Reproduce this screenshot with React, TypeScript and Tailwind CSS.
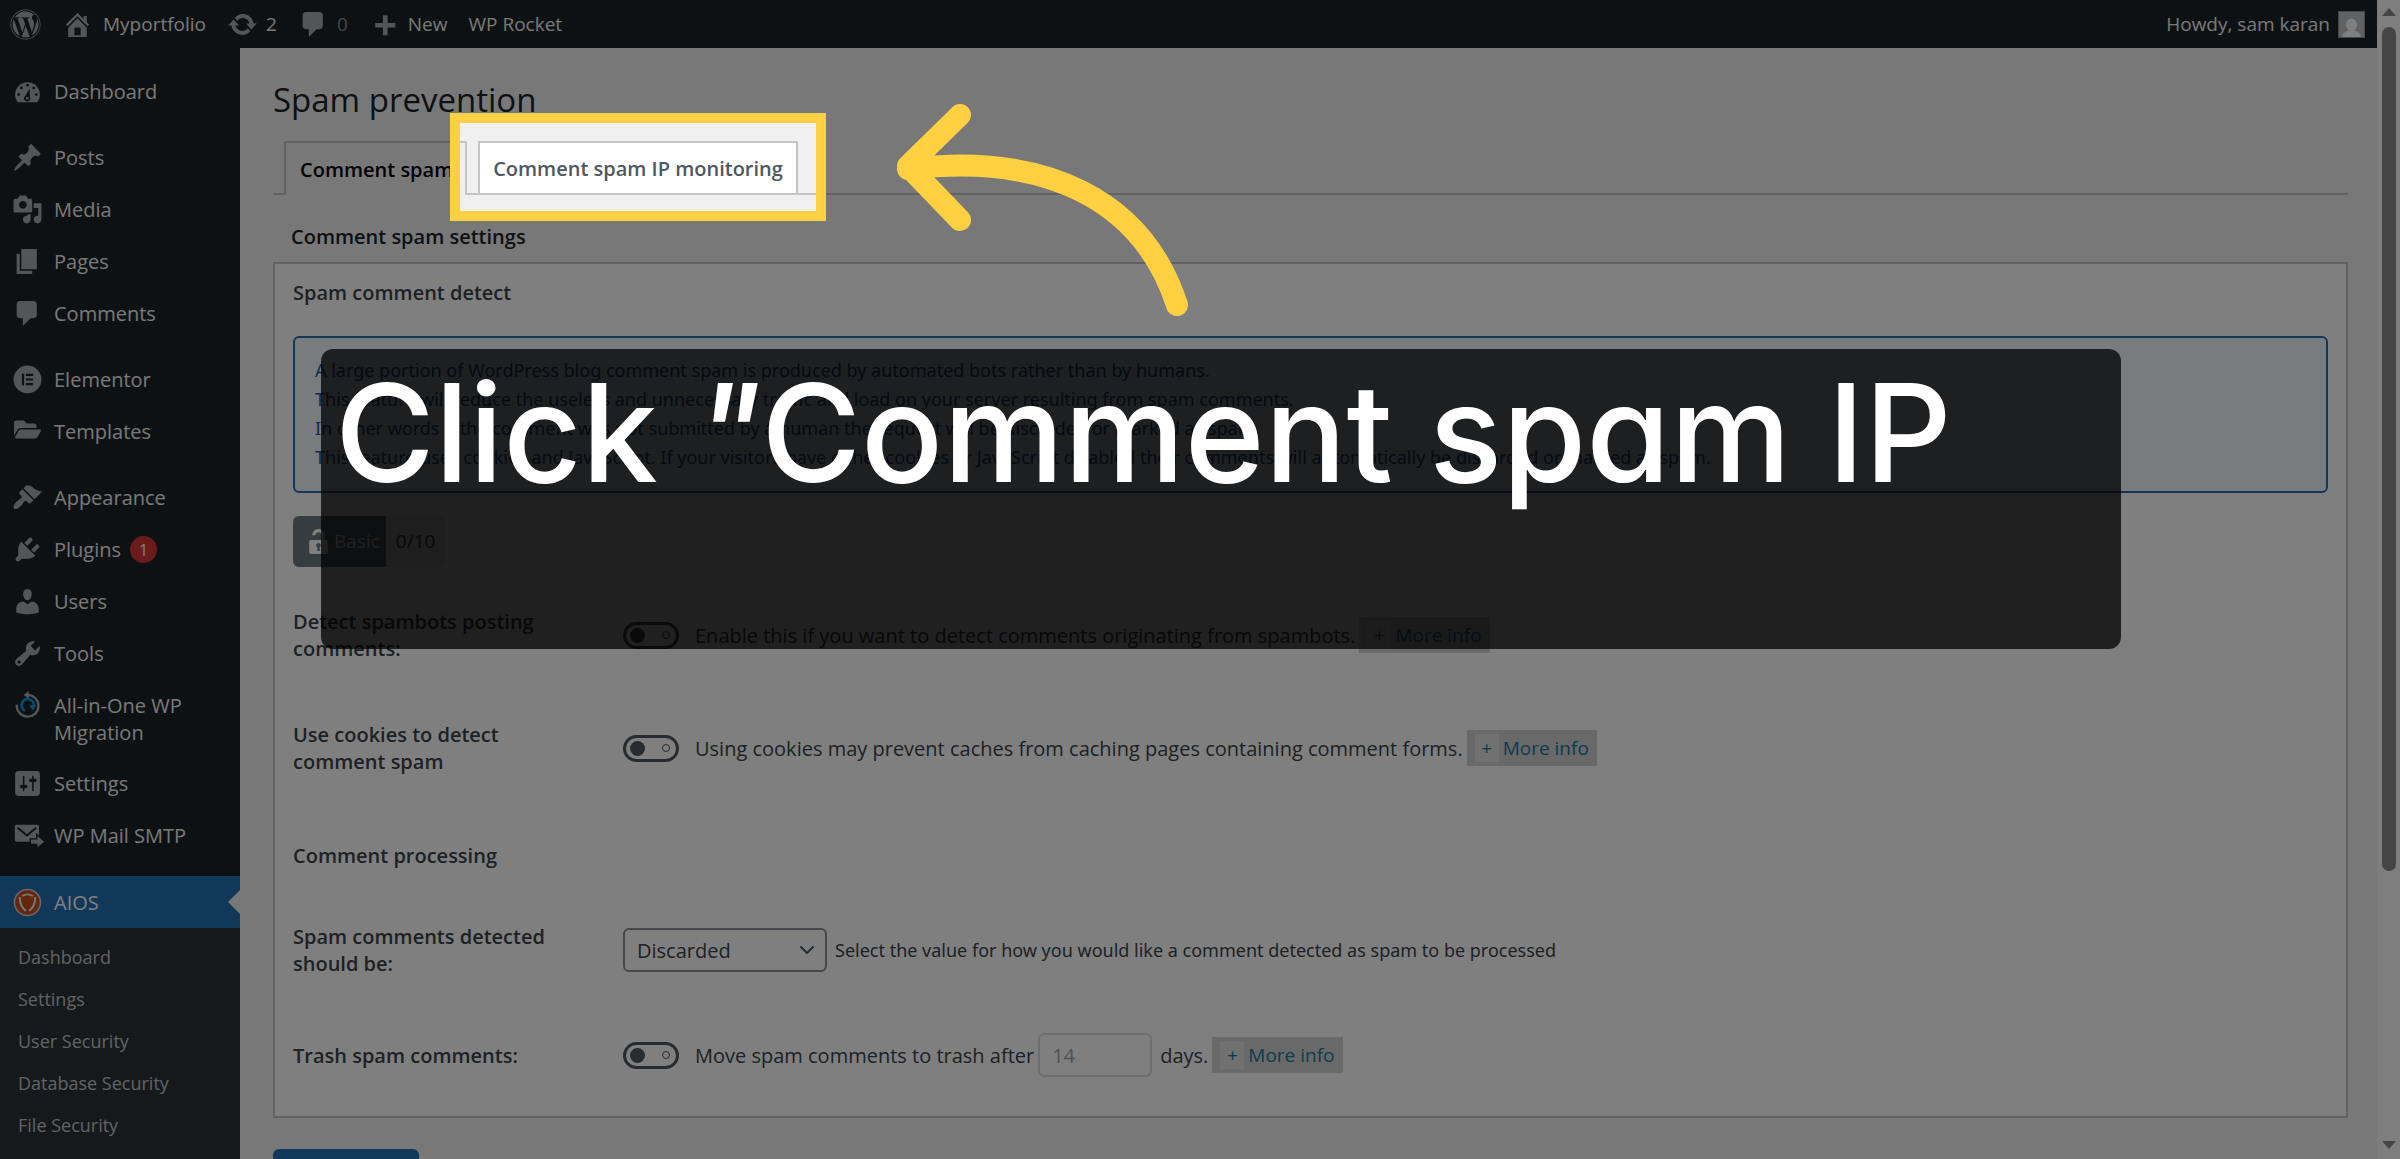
import type { ReactNode } from 'react';
import { ChevronDown } from 'lucide-react';
import { FaFolderOpen, FaWordpress } from 'react-icons/fa';

const ICONS = {
  home: 'M16 8.5l1.53 1.53-1.06 1.06L10 4.6l-6.47 6.49-1.06-1.06L10 2.5l4 4v-2h2v4zm-6-2.46l6 5.99V18H4v-5.97zM12 17v-5H8v5h4z',
  update: 'M10.2 3.28c3.53 0 6.43 2.61 6.92 6h2.08l-3.5 4-3.5-4h2.32c-.45-1.97-2.21-3.45-4.32-3.45-1.45 0-2.73.71-3.54 1.78L4.95 5.66C6.23 4.2 8.11 3.28 10.2 3.28zm-.4 13.44c-3.52 0-6.43-2.61-6.92-6H.8l3.5-4c1.17 1.33 2.33 2.67 3.5 4H5.48c.45 1.97 2.21 3.45 4.32 3.45 1.45 0 2.73-.71 3.54-1.78l1.71 1.95c-1.28 1.46-3.15 2.38-5.25 2.38z',
  plus: 'M17 9v3h-5v5H9v-5H4V9h5V4h3v5h5z',
  comments: 'M5 2h9c1.1 0 2 .9 2 2v7c0 1.1-.9 2-2 2h-2l-5 5v-5H5c-1.1 0-2-.9-2-2V4c0-1.1.9-2 2-2z',
  post: 'M10.44 3.02l1.82-1.82 6.36 6.35-1.83 1.82c-1.05-.68-2.48-.57-3.41.36l-.75.75c-.92.93-1.04 2.35-.35 3.41l-1.83 1.82-2.41-2.41-2.8 2.79c-.42.42-3.38 2.71-3.8 2.29s1.86-3.39 2.28-3.81l2.79-2.79L4.1 9.36l1.83-1.82c1.05.69 2.48.57 3.4-.36l.75-.75c.93-.92 1.05-2.35.36-3.41z',
  media: 'M13 11V4c0-.55-.45-1-1-1h-1.67L9 1H5L3.67 3H2c-.55 0-1 .45-1 1v7c0 .55.45 1 1 1h10c.55 0 1-.45 1-1zM7 4.5c1.38 0 2.5 1.12 2.5 2.5S8.38 9.5 7 9.5 4.5 8.38 4.5 7 5.62 4.5 7 4.5zM14 6h5v10.5c0 1.38-1.12 2.5-2.5 2.5S14 17.88 14 16.5s1.12-2.5 2.5-2.5c.17 0 .34.02.5.05V9h-3V6zm-4 8.05V13h2v3.5c0 1.38-1.12 2.5-2.5 2.5S7 17.88 7 16.5 8.12 14 9.5 14c.17 0 .34.02.5.05z',
  page: 'M6 15V2h10v13H6zm-1 1h8v2H3V5h2v11z',
  appearance: 'M14.48 11.06L7.41 3.99l1.5-1.5c.5-.56 2.3-.47 3.51.32 1.21.8 1.43 1.28 2.91 2.1 1.18.64 2.45 1.26 4.45.85zm-.71.71L6.7 4.7 4.93 6.47c-.39.39-.39 1.02 0 1.41l1.06 1.06c.39.39.39 1.03 0 1.42-.6.6-1.43 1.11-2.21 1.69-.35.26-.7.53-1.01.84C1.43 14.23.4 16.08 1.4 17.07c.99 1 2.84-.03 4.18-1.36.31-.31.58-.66.85-1.02.57-.78 1.08-1.61 1.69-2.21.39-.39 1.02-.39 1.41 0l1.06 1.06c.39.39 1.02.39 1.41 0z',
  plugins: 'M13.11 4.36L9.87 7.6 8 5.73l3.24-3.24c.35-.34 1.05-.2 1.56.32.52.51.66 1.21.31 1.55zm-8 1.77l.91-1.12 9.01 9.01-1.19.84c-.71.71-2.63 1.16-3.82 1.16H6.14L4.9 17.26c-.59.59-1.54.59-2.12 0-.59-.58-.59-1.53 0-2.12l1.24-1.24v-3.88c0-1.13.4-3.19 1.09-3.89zm7.26 3.97l3.24-3.24c.34-.35 1.04-.21 1.55.31.52.51.66 1.21.31 1.55l-3.24 3.25z',
  users: 'M10 9.25c-2.27 0-2.73-3.44-2.73-3.44C7 4.02 7.82 2 9.97 2c2.16 0 2.98 2.02 2.71 3.81 0 0-.41 3.44-2.68 3.44zm0 2.57L12.72 10c2.39 0 4.52 2.33 4.52 4.53v2.49s-3.65 1.13-7.24 1.13c-3.65 0-7.24-1.13-7.24-1.13v-2.49c0-2.25 1.94-4.48 4.47-4.48z',
  tools: 'M16.68 9.77c-1.34 1.34-3.3 1.67-4.95.99l-5.41 6.52c-.99.99-2.59.99-3.58 0s-.99-2.59 0-3.57l6.52-5.42c-.68-1.65-.35-3.61.99-4.95 1.28-1.28 3.12-1.62 4.72-1.06l-2.89 2.89 2.82 2.82 2.86-2.87c.53 1.58.18 3.39-1.08 4.65zM3.81 16.21c.4.39 1.04.39 1.43 0 .4-.4.4-1.04 0-1.43-.39-.4-1.03-.4-1.43 0-.39.39-.39 1.03 0 1.43z',
  settings: 'M18 16V4c0-1.1-.9-2-2-2H4c-1.1 0-2 .9-2 2v12c0 1.1.9 2 2 2h12c1.1 0 2-.9 2-2zM8 11h1c.55 0 1 .45 1 1s-.45 1-1 1H8v1.5c0 .28-.22.5-.5.5s-.5-.22-.5-.5V13H6c-.55 0-1-.45-1-1s.45-1 1-1h1V5.5c0-.28.22-.5.5-.5s.5.22.5.5V11zm5-2h-1c-.55 0-1-.45-1-1s.45-1 1-1h1V5.5c0-.28.22-.5.5-.5s.5.22.5.5V7h1c.55 0 1 .45 1 1s-.45 1-1 1h-1v5.5c0 .28-.22.5-.5.5s-.5-.22-.5-.5V9z',
  unlock: 'M12 9V6c0-1.1-.9-2-2-2s-2 .9-2 2H6c0-2.21 1.79-4 4-4s4 1.79 4 4v3h1c.55 0 1 .45 1 1v7c0 .55-.45 1-1 1H5c-.55 0-1-.45-1-1v-7c0-.55.45-1 1-1h7zm-1 7l-.36-2.15c.51-.24.86-.75.86-1.35 0-.83-.67-1.5-1.5-1.5s-1.5.67-1.5 1.5c0 .6.35 1.11.86 1.35L9 16h2z',
};

type IconName = keyof typeof ICONS;

function Dashicon({ name, className = 'size-[31px]' }: { name: IconName; className?: string }) {
  return (
    <svg viewBox="0 0 20 20" className={`${className} shrink-0`} fill="currentColor" aria-hidden="true">
      <path fillRule="evenodd" d={ICONS[name]} />
    </svg>
  );
}

function DashboardIcon() {
  return (
    <svg viewBox="0 0 20 20" className="size-[31px] shrink-0" aria-hidden="true">
      <path fill="currentColor" d="M3.76 17h12.48c1.1-1.37 1.76-3.11 1.76-5 0-4.42-3.58-8-8-8s-8 3.58-8 8c0 1.89.66 3.63 1.76 5z" />
      <g fill="#1d2327">
        <circle cx="10" cy="5.9" r="0.9" />
        <circle cx="6" cy="7.7" r="0.9" />
        <circle cx="14" cy="7.7" r="0.9" />
        <circle cx="4.3" cy="12" r="0.9" />
        <circle cx="15.7" cy="12" r="0.9" />
        <path d="M11.4 8l.2 5.6a2 2 0 1 1-3.2-.6z" />
      </g>
      <circle cx="9.9" cy="14.3" r="0.8" fill="currentColor" />
    </svg>
  );
}

function ElementorIcon() {
  return (
    <svg viewBox="0 0 20 20" className="size-[31px] shrink-0" aria-hidden="true">
      <circle cx="10" cy="10" r="9" fill="currentColor" />
      <path fill="#1d2327" d="M6.4 6.3h1.4v7.4H6.4zM9 6.3h4.6v1.4H9zM9 9.3h4.6v1.4H9zM9 12.3h4.6v1.4H9z" />
    </svg>
  );
}

function MigrationIcon() {
  return (
    <svg viewBox="0 0 20 20" className="size-[31px] shrink-0" fill="none" aria-hidden="true">
      <path stroke="currentColor" strokeWidth="1.5" d="M3.1 9.5A7 7 0 1 0 10 3.2" />
      <path fill="currentColor" d="M10.8 0.6v5.2L7.6 3.2z" />
      <path stroke="#0a9ad8" strokeWidth="1.8" d="M8.3 13.4A4 4 0 1 1 14 11" />
      <path fill="#0a9ad8" d="M11 10l4.4-.4-1.6 3.8z" />
    </svg>
  );
}

function MailIcon() {
  return (
    <svg viewBox="0 0 20 20" className="size-[31px] shrink-0 overflow-visible" aria-hidden="true">
      <rect x="1.8" y="3" width="15.6" height="11" rx="1.2" fill="currentColor" />
      <path stroke="#1d2327" strokeWidth="1.3" fill="none" d="M3.6 5l6 5 6-5" />
      <path fill="currentColor" stroke="#1d2327" strokeWidth="0.9" d="M11.8 12.2h4.2V9.4l5.4 4.6-5.4 4.6v-2.8h-4.2z" />
    </svg>
  );
}

function ShieldIcon() {
  return (
    <svg viewBox="0 0 20 20" className="size-[31px] shrink-0" fill="none" aria-hidden="true">
      <circle cx="10" cy="10" r="8.4" fill="#c4521f" stroke="#d8cfca" strokeWidth="1" />
      <path stroke="#eee" strokeWidth="1.3" d="M5 6.4c0 4 1.3 7 4 9M15 6.4c0 4-1.3 7-4 9" />
      <path stroke="#eee" strokeWidth="1.1" d="M6.4 5.9q3.6-2.4 7.2 0" />
    </svg>
  );
}

interface MenuItem {
  label: string;
  icon: ReactNode;
  count?: number;
}

const MENU: MenuItem[][] = [
  [{ label: 'Dashboard', icon: <DashboardIcon /> }],
  [
    { label: 'Posts', icon: <Dashicon name="post" /> },
    { label: 'Media', icon: <Dashicon name="media" /> },
    { label: 'Pages', icon: <Dashicon name="page" /> },
    { label: 'Comments', icon: <Dashicon name="comments" /> },
  ],
  [
    { label: 'Elementor', icon: <ElementorIcon /> },
    { label: 'Templates', icon: <FaFolderOpen className="mx-0.5 size-[27px] shrink-0" aria-hidden="true" /> },
  ],
  [
    { label: 'Appearance', icon: <Dashicon name="appearance" /> },
    { label: 'Plugins', icon: <Dashicon name="plugins" />, count: 1 },
    { label: 'Users', icon: <Dashicon name="users" /> },
    { label: 'Tools', icon: <Dashicon name="tools" /> },
    { label: 'All-in-One WP Migration', icon: <MigrationIcon /> },
    { label: 'Settings', icon: <Dashicon name="settings" /> },
    { label: 'WP Mail SMTP', icon: <MailIcon /> },
  ],
];

const SUBMENU = ['Dashboard', 'Settings', 'User Security', 'Database Security', 'File Security'];

const NOTICE_LINES = [
  'A large portion of WordPress blog comment spam is produced by automated bots rather than by humans.',
  'This feature will reduce the useless and unnecessary traffic and load on your server resulting from spam comments.',
  'In other words if the comment was not submitted by a human the request will be discarded or marked as spam.',
  'This feature uses cookies and JavaScript. If your visitors have either cookies or JavaScript disabled their comments will automatically be discarded or marked as spam.',
];

function AdminBar() {
  return (
    <header className="flex h-12 shrink-0 items-center bg-[#1d2327] pr-3 pl-2.5 text-[19px] leading-7 text-[#f0f0f1]">
      <a href="#wp" aria-label="About WordPress" className="text-[#a7aaad]">
        <FaWordpress className="size-[31px]" />
      </a>
      <a href="#site" className="ml-[21px] flex items-center gap-2.5">
        <Dashicon name="home" className="size-[31px] text-[#a7aaad]" />
        Myportfolio
      </a>
      <a href="#updates" className="ml-[21px] flex items-center gap-2">
        <Dashicon name="update" className="size-[31px] text-[#a7aaad]" />
        2
      </a>
      <a href="#comments" className="ml-[21px] flex items-center gap-2 text-[#a7aaad]">
        <Dashicon name="comments" className="size-[31px]" />
        <span className="text-[#8b8f93]">0</span>
      </a>
      <a href="#new" className="ml-[21px] flex items-center gap-2">
        <Dashicon name="plus" className="size-[31px] text-[#a7aaad]" />
        New
      </a>
      <a href="#rocket" className="ml-[21px]">WP Rocket</a>
      <a href="#profile" className="ml-auto flex items-center gap-2">
        Howdy, sam karan
        <svg viewBox="0 0 27 27" className="size-[27px]" aria-hidden="true">
          <rect width="27" height="27" fill="#8c8f94" />
          <rect x="1" y="1" width="25" height="25" fill="#c3c4c7" />
          <ellipse cx="13.5" cy="14" rx="5.5" ry="6.5" fill="#fff" />
          <path d="M4 26c1-5 5-6.5 9.5-6.5s8.5 1.5 9.5 6.5z" fill="#fff" />
        </svg>
      </a>
    </header>
  );
}

function Sidebar() {
  return (
    <nav className="w-60 shrink-0 bg-[#1d2327] pt-[18px] text-[20px] leading-[27px] text-[#f0f0f1]" aria-label="Admin menu">
      {MENU.map((group, i) => (
        <ul key={i} className="mb-3.5">
          {group.map(item => (
            <li key={item.label}>
              <a href={`#${item.label}`} className="flex min-h-[52px] items-start gap-[11px] py-3 pr-8 pl-3">
                <span className="-my-0.5 text-[#a7aaad]">{item.icon}</span>
                <span>{item.label}</span>
                {item.count && (
                  <span className="-ml-0.5 flex size-[27px] items-center justify-center rounded-full bg-[#d63638] text-base text-white">
                    {item.count}
                  </span>
                )}
              </a>
            </li>
          ))}
        </ul>
      ))}
      <a href="#aios" className="relative flex h-[52px] items-center gap-[11px] bg-[#2271b1] pl-3 text-white">
        <ShieldIcon />
        AIOS
        <svg viewBox="0 0 12 24" className="absolute right-0 h-6 w-3" aria-hidden="true">
          <path d="M12 0v24L0 12z" fill="#f0f0f1" />
        </svg>
      </a>
      <ul className="bg-[#2c3338] pt-2 pb-10 text-[18px] text-[#c3c4c7]">
        {SUBMENU.map(label => (
          <li key={label}>
            <a href={`#aios-${label}`} className="flex h-[42px] items-center pl-[18px]">{label}</a>
          </li>
        ))}
      </ul>
    </nav>
  );
}

function Toggle({ id, label }: { id: string; label: string }) {
  return (
    <label htmlFor={id} className="flex h-[27px] w-14 items-center justify-between rounded-full border-[3px] border-[#50575e] pr-1.5 pl-1">
      <input id={id} type="checkbox" className="sr-only" aria-label={label} />
      <span className="size-[15px] rounded-full bg-[#50575e]" />
      <span className="size-2 rounded-full border border-[#50575e]" />
    </label>
  );
}

function MoreInfo() {
  return (
    <button className="flex h-9 items-center gap-1 bg-[#d2d2d2] px-2 text-[19px] leading-7 text-[#21759b]">
      <span className="flex h-7 w-6 items-center justify-center bg-[#e2e2e2]">+</span>
      More info
    </button>
  );
}

function Row({ label, className, children }: { label: string; className: string; children: ReactNode }) {
  return (
    <div className={`flex items-center ${className}`}>
      <div className="w-[330px] shrink-0">
        <h4 className="w-[260px] font-semibold">{label}</h4>
      </div>
      {children}
    </div>
  );
}

function SettingsCard() {
  return (
    <section className="mt-3 border-2 border-[#c3c4c7] bg-white px-[18px] pt-[15px] pb-[39px]">
      <h3 className="font-semibold">Spam comment detect</h3>
      <div className="mt-[30px] rounded-md border-2 border-[#2a6cb0] bg-[#f0f8ff] px-5 pt-[18px] pb-[19px] font-['Noto_Sans',sans-serif] text-[18px] leading-[29px] text-[#22579a]">
        {NOTICE_LINES.map(line => (
          <p key={line}>{line}</p>
        ))}
      </div>

      <div className="mt-[23px] flex h-[51px] w-fit items-stretch overflow-hidden rounded-md bg-[#f0f0f0] text-[19px]">
        <span className="flex items-center bg-[#6c7a80] pr-1.5 pl-2.5 text-white">
          <Dashicon name="unlock" />
          Basic
        </span>
        <span className="flex items-center px-2.5">0/10</span>
      </div>

      <Row label="Detect spambots posting comments:" className="mt-[41px]">
        <Toggle id="detect-spambots" label="Detect spambots posting comments" />
        <span className="mr-1 ml-4">Enable this if you want to detect comments originating from spambots.</span>
        <MoreInfo />
      </Row>
      <Row label="Use cookies to detect comment spam" className="mt-[59px]">
        <Toggle id="use-cookies" label="Use cookies to detect comment spam" />
        <span className="mr-1 ml-4">Using cookies may prevent caches from caching pages containing comment forms.</span>
        <MoreInfo />
      </Row>

      <h3 className="mt-[67px] font-semibold">Comment processing</h3>
      <Row label="Spam comments detected should be:" className="mt-[54px]">
        <span className="relative">
          <select
            aria-label="Spam comments detected should be"
            className="h-11 w-[204px] appearance-none rounded-md border-2 border-[#8c8f94] bg-white pl-3"
          >
            <option>Discarded</option>
          </select>
          <ChevronDown size={24} className="pointer-events-none absolute top-2.5 right-2 text-[#50575e]" aria-hidden="true" />
        </span>
        <span className="ml-2 font-['Noto_Sans',sans-serif] text-[18px]">
          Select the value for how you would like a comment detected as spam to be processed
        </span>
      </Row>
      <Row label="Trash spam comments:" className="mt-14">
        <Toggle id="trash-spam" label="Trash spam comments" />
        <label htmlFor="trash-days" className="ml-4">Move spam comments to trash after</label>
        <input
          id="trash-days"
          type="text"
          defaultValue="14"
          className="mr-2 ml-1 h-11 w-[114px] rounded-md border-2 border-[#dcdcde] bg-white px-3 text-[#a0a2a6]"
        />
        <span className="mr-1">days.</span>
        <MoreInfo />
      </Row>
    </section>
  );
}

// Frame around the highlighted tab, its shadow dims the rest of the screen
function Spotlight() {
  return (
    <span className="pointer-events-none absolute -inset-x-[30px] -top-[30px] -bottom-7 z-10 border-10 border-[#ffd042] shadow-[0_0_0_9999px_rgba(0,0,0,0.5)]" />
  );
}

function Tabs() {
  return (
    <div className="mt-[21px] flex h-[54px] gap-[11px] border-b-2 border-[#c3c4c7] pl-[11px]" role="tablist">
      <button role="tab" aria-selected="true" className="-mb-0.5 w-[183px] border-2 border-b-0 border-[#c3c4c7] bg-[#f0f0f1] pl-3.5 text-left font-semibold text-black">
        Comment spam
      </button>
      <button role="tab" aria-selected="false" className="relative w-80 border-2 border-b-0 border-[#c3c4c7] bg-white font-semibold text-[#50575e]">
        Comment spam IP monitoring
        <Spotlight />
      </button>
    </div>
  );
}

function Scrollbar() {
  return (
    <div className="flex w-[23px] shrink-0 flex-col items-center bg-[#fcfcfc] pt-2 pb-2.5" aria-hidden="true">
      <svg viewBox="0 0 14 8" className="h-2 w-3.5 shrink-0"><path d="M7 0l7 8H0z" fill="#8b8b8b" /></svg>
      <div className="mt-[11px] h-[74%] w-3.5 rounded-full bg-[#8b8b8b]" />
      <svg viewBox="0 0 14 8" className="mt-auto h-2 w-3.5 shrink-0"><path d="M7 8l7-8H0z" fill="#8b8b8b" /></svg>
    </div>
  );
}

export default function App() {
  return (
    <div className="relative flex h-screen overflow-hidden bg-[#f0f0f1] font-['Open_Sans','Noto_Sans',sans-serif] text-[20px] leading-[27px] text-[#3c434a]">
      <div className="flex min-w-0 flex-1 flex-col">
        <AdminBar />
        <div className="flex flex-1">
          <Sidebar />
          <main className="flex-1 pt-8 pr-[29px] pl-[33px]">
            <h1 className="text-[33px] leading-10 text-[#1d2327]">Spam prevention</h1>
            <Tabs />
            <h2 className="mt-7 pl-[18px] font-semibold text-[#1d2327]">Comment spam settings</h2>
            <SettingsCard />
            <button className="mt-[31px] h-[46px] w-[146px] rounded-md bg-[#2271b1] text-white" aria-label="Save settings" />
          </main>
        </div>
      </div>
      <Scrollbar />

      <svg viewBox="890 95 310 230" className="absolute top-[95px] left-[890px] z-20 h-[230px] w-[310px]" fill="none" aria-hidden="true">
        <path
          d="M960 115L908 166L960 220M908 169C1046 152 1143 200 1177 305"
          stroke="#ffd042"
          strokeWidth="22"
          strokeLinecap="round"
          strokeLinejoin="round"
        />
      </svg>
      <div className="absolute top-[349px] left-[321px] z-20 h-[300px] w-3/4 rounded-xl bg-black/75 px-3.5 pt-4">
        <p className="font-['Inter',sans-serif] text-[136px] leading-[136px] font-medium whitespace-nowrap text-white [font-feature-settings:'cv11']">
          Click <em>"</em>Comment spam IP
        </p>
      </div>
    </div>
  );
}
